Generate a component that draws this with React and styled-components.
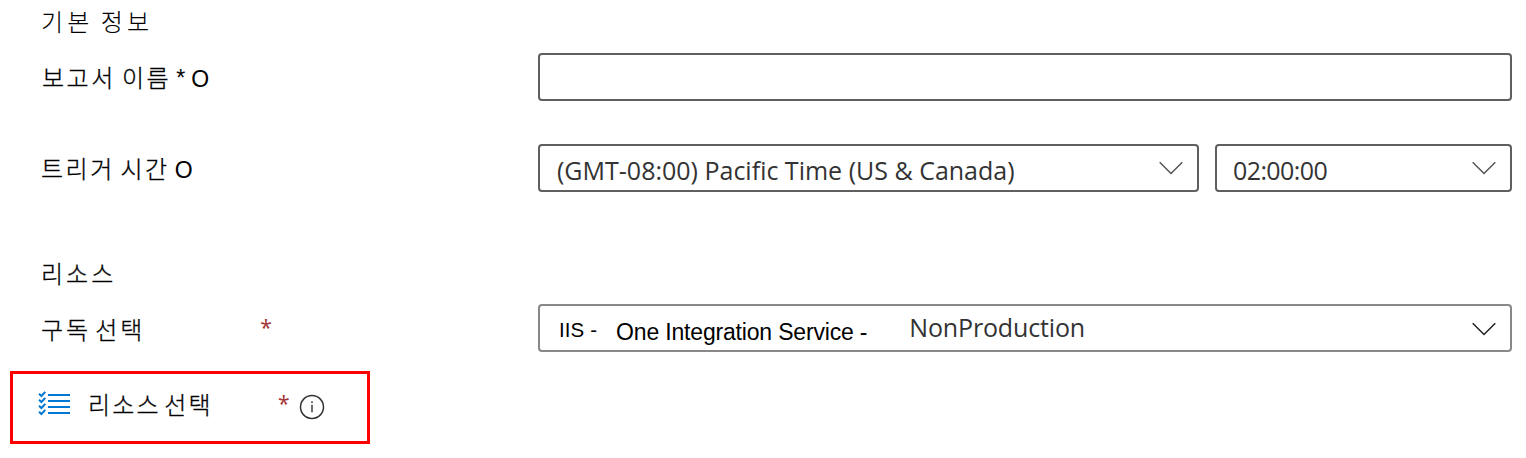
import React from 'react';
import styled, { createGlobalStyle } from 'styled-components';

const GlobalStyle = createGlobalStyle`
  * { box-sizing: border-box; }
  body { margin: 0; background: #fff; }
`;

const Form = styled.main`
  width: 1526px;
  height: 458px;
  padding-right: 14px;
  overflow: hidden;
  background: #fff;
`;

const Text = styled.span`
  flex: none;
  white-space: pre;
  line-height: 32px;
  font-family: ${(p) => p.$font || '"Liberation Sans"'}, sans-serif;
  font-size: ${(p) => p.$size || 23}px;
  letter-spacing: ${(p) => p.$spacing || 0}px;
  color: ${(p) => p.$color || '#000'};
  margin-left: ${(p) => p.$left || 0}px;
  margin-top: ${(p) => p.$top || 0}px;
`;

const Korean = styled(Text)`
  font-family: "Noto Sans CJK KR", sans-serif;
  font-size: 24px;
  font-weight: 300;
  word-spacing: ${(p) => p.$word || 0}px;
  -webkit-text-stroke: ${(p) => p.$stroke ?? 0.3}px #000;
`;

const SectionTitle = styled.h2`
  display: flex;
  margin: 0;
  padding: ${(p) => p.$top}px 0 0 41px;
  height: ${(p) => p.$height}px;
  font-weight: 400;
`;

const Row = styled.div`
  display: flex;
  height: 48px;
  margin-bottom: ${(p) => p.$gap}px;
`;

const Label = styled.label`
  display: flex;
  align-items: flex-start;
  flex: none;
  width: 538px;
  padding: 9px 0 0 41px;
`;

const Controls = styled.div`
  display: flex;
  flex: 1;
  gap: 16px;
`;

const Field = styled.div`
  display: flex;
  align-items: flex-start;
  width: ${(p) => p.$width || 974}px;
  height: 48px;
  padding: 8px 14px 0 16px;
  border: 2px solid ${(p) => p.$border || '#5f5f5f'};
  border-radius: 4px;
  background: #fff;
`;

const Required = styled.span`
  flex: none;
  width: 12px;
  line-height: 28px;
  font-family: "Noto Sans", sans-serif;
  font-size: 21px;
  color: #a4373a;
  margin-left: ${(p) => p.$left}px;
`;

const Chevron = styled.svg`
  flex: none;
  width: 24px;
  height: 14px;
  margin: ${(p) => p.$top}px 0 0 auto;
  fill: none;
  stroke: ${(p) => p.$color};
  stroke-width: 1.5;
`;

const Highlight = styled.div`
  display: flex;
  align-items: flex-start;
  width: 360px;
  height: 73px;
  margin-left: 10px;
  padding: 15px 0 0 25px;
  border: 3px solid #f00;
`;

const Icon = styled.svg`
  flex: none;
  display: block;
  width: ${(p) => p.$w}px;
  height: ${(p) => p.$h}px;
  margin: ${(p) => p.$top}px 0 0 ${(p) => p.$left || 0}px;
  fill: none;
`;

const UI = '"Open Sans"';

function Down({ top = 7, color = '#555' }) {
  return (
    <Chevron viewBox="0 0 24 14" $top={top} $color={color}>
      <path d="M.7 1.2 12 12.5 23.3 1.2" />
    </Chevron>
  );
}

function ChecklistIcon() {
  return (
    <Icon viewBox="0 0 33 26" $w={33} $h={26} $top={2}>
      {[0, 6, 12, 18].map((y) => (
        <g key={y} stroke="#0078d4">
          <path d={`M1 ${y + 2.8}l2.4 2.2L7.3 ${y + 0.9}`} strokeWidth="2" />
          <path d={`M10 ${y + 4}H32`} strokeWidth="2" />
        </g>
      ))}
    </Icon>
  );
}

function InfoIcon() {
  return (
    <Icon viewBox="0 0 26 26" $w={26} $h={26} $top={5} $left={9}>
      <circle cx="13" cy="13" r="11.5" stroke="#333" strokeWidth="1.5" />
      <path d="M13 10.7V18.3M13 7.2v1.8" stroke="#333" strokeWidth="1.4" />
    </Icon>
  );
}

export default function App() {
  return (
    <>
      <GlobalStyle />
      <Form>
        <SectionTitle $top={5} $height={53}>
          <Korean $spacing={4.1} $word={-2} $stroke={0.1}>기본 정보</Korean>
        </SectionTitle>
        <Row $gap={43}>
          <Label>
            <Korean $spacing={2.5} $word={-1.5} $left={1} $top={-1}>보고서 이름</Korean>
            <Text $size={23} $left={5}>*</Text>
            <Text $size={23} $left={6} $top={1}>O</Text>
          </Label>
          <Controls><Field /></Controls>
        </Row>
        <Row $gap={66}>
          <Label>
            <Korean $spacing={2.5} $word={-2} $top={-1}>트리거 시간</Korean>
            <Text $size={23} $left={5} $top={1}>O</Text>
          </Label>
          <Controls>
            <Field $width={661}>
              <Text $font={UI} $size={25} $left={1} $color="#333">(GMT-08:00) Pacific Time (US &amp; Canada)</Text>
              <Down />
            </Field>
            <Field $width={297}>
              <Text $font={UI} $size={25} $spacing={-0.6} $color="#333">02:00:00</Text>
              <Down />
            </Field>
          </Controls>
        </Row>
        <SectionTitle $top={0} $height={46}>
          <Korean $spacing={3} $top={-1}>리소스</Korean>
        </SectionTitle>
        <Row $gap={19}>
          <Label>
            <Korean $spacing={2.9} $word={-4}>구독 선택</Korean>
            <Required $left={115}>*</Required>
          </Label>
          <Controls>
            <Field $border="#8a8886">
              <Text $size={20.5} $spacing={0.1} $left={3}>IIS -</Text>
              <Text $size={23} $spacing={-0.18} $left={19} $top={2}>One Integration Service -</Text>
              <Text $font={UI} $size={25} $spacing={-0.15} $color="#333" $left={42} $top={-3}>NonProduction</Text>
              <Down top={8} color="#222" />
            </Field>
          </Controls>
        </Row>
        <Highlight>
          <ChecklistIcon />
          <Korean $spacing={2.2} $word={-4} $left={17} $top={-1}>리소스 선택</Korean>
          <Required $left={65}>*</Required>
          <InfoIcon />
        </Highlight>
      </Form>
    </>
  );
}
